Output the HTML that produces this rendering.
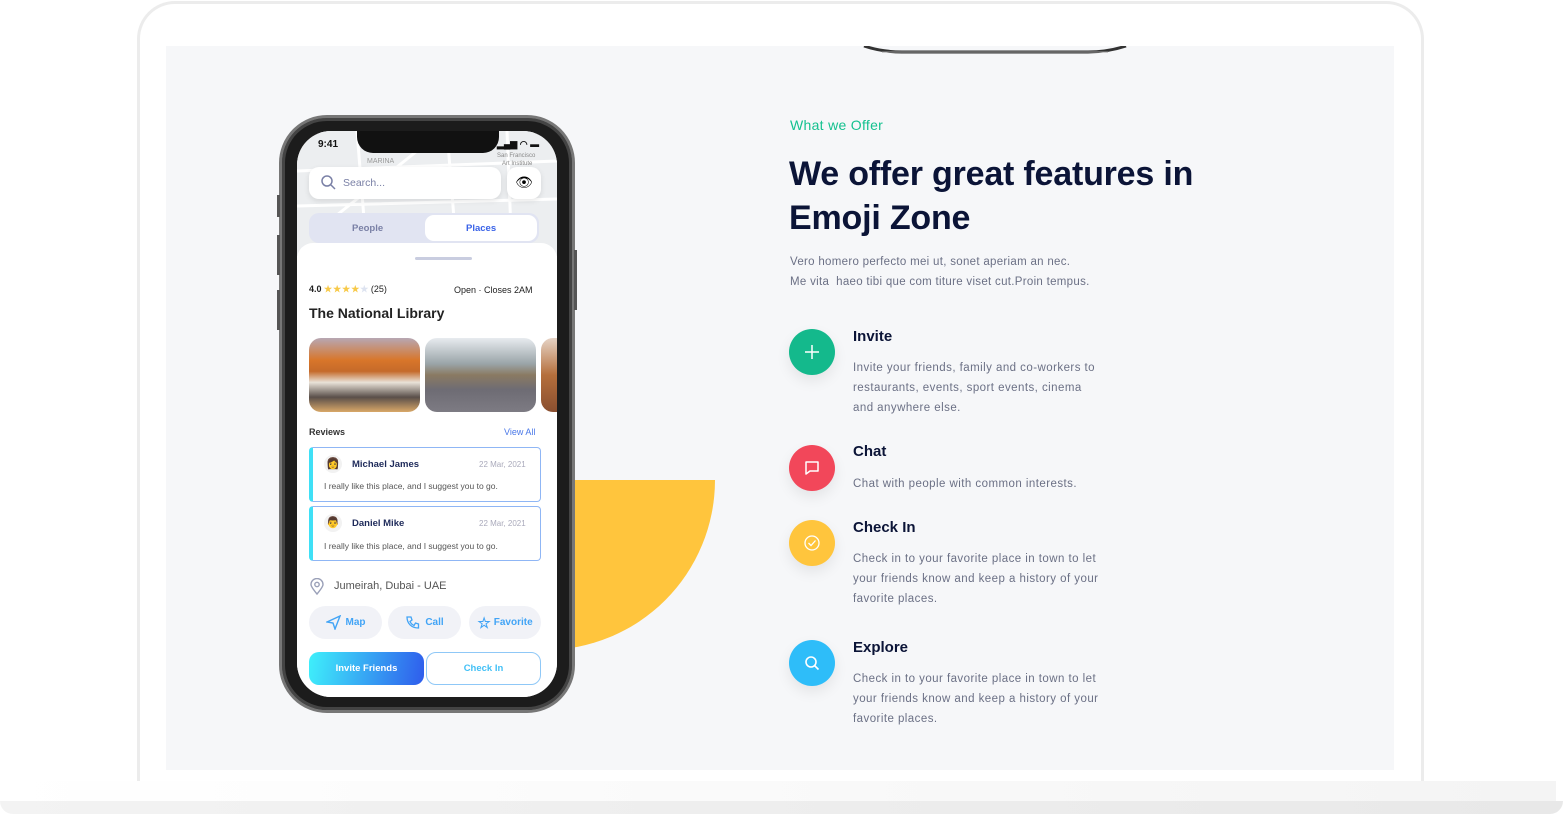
<!DOCTYPE html>
<html><head><meta charset="utf-8"><style>
*{margin:0;padding:0;box-sizing:border-box}
body{width:1563px;height:814px;background:#fff;position:relative;overflow:hidden;font-family:"Liberation Sans",sans-serif}
.a{position:absolute}
.frame{left:137px;top:1px;width:1287px;height:800px;border:3px solid #ececec;border-bottom:none;border-radius:38px 38px 0 0;background:#fff}
.screen{left:166px;top:46px;width:1228px;height:724px;background:#f6f7f9}
.base1{left:0;top:781px;width:1556px;height:20px;background:linear-gradient(90deg,#fff,#f4f4f4)}
.base2{left:0;top:801px;width:1563px;height:13px;background:linear-gradient(90deg,#f3f3f3,#e8e8e8);border-radius:0 0 40px 40px}
.ttl{color:#0b1437;font-weight:bold}
.p{color:#6b7085;font-size:11.5px;line-height:20px;letter-spacing:.45px}
.ic{width:46px;height:46px;border-radius:50%;box-shadow:0 6px 14px rgba(0,0,0,.08);display:flex;align-items:center;justify-content:center}
.ph{font-size:10px;color:#222}
.rev{left:309px;width:232px;height:55px;border:1.5px solid #8fb6f5;border-left:4px solid #3fe0f6;border-radius:4px;background:#fff}
.btn{top:606px;height:33px;border-radius:17px;background:#f1f2f7;color:#42a4f6;font-size:10px;font-weight:bold;display:flex;align-items:center;justify-content:center;gap:5px}
</style></head><body>
<div class="a frame"></div>
<div class="a screen"></div>
<div class="a base1"></div>
<div class="a base2"></div>
<!-- top phone edge -->
<svg class="a" style="left:862px;top:46px" width="266" height="8"><path d="M2 0Q20 6 40 6H226Q246 6 264 0" stroke="#333" stroke-width="3" fill="none"/><path d="M20 6H246" stroke="#999" stroke-width="1"/></svg>
<!-- yellow quarter -->
<div class="a" style="left:375px;top:310px;width:340px;height:340px;border-radius:50%;background:#ffc53d;clip-path:inset(170px 0 0 170px)"></div>

<!-- phone -->
<div class="a" style="left:279px;top:115px;width:296px;height:598px;border-radius:48px;background:#1c1c1c;border:3px solid #777;box-shadow:inset 0 0 0 3px #444"></div>
<div class="a" style="left:277px;top:195px;width:3px;height:22px;background:#555"></div>
<div class="a" style="left:277px;top:235px;width:3px;height:40px;background:#555"></div>
<div class="a" style="left:277px;top:290px;width:3px;height:40px;background:#555"></div>
<div class="a" style="left:574px;top:250px;width:3px;height:60px;background:#555"></div>
<div class="a" style="left:297px;top:131px;width:260px;height:566px;border-radius:34px;background:#fff;overflow:hidden">
  <div class="a" style="left:0;top:0;width:260px;height:125px;background:#eceef0"></div>
  <svg class="a" style="left:0;top:0" width="260" height="125"><g stroke="#fff" stroke-width="3" fill="none"><path d="M0 40L260 30M0 75L260 68M60 0L70 125M150 0L160 125M210 0L215 125M20 100L120 20"/></g><text x="70" y="32" font-size="7" fill="#999" font-family="Liberation Sans">MARINA</text><text x="200" y="26" font-size="6" fill="#888" font-family="Liberation Sans">San Francisco</text><text x="205" y="34" font-size="6" fill="#888" font-family="Liberation Sans">Art Institute</text></svg>
  <div class="a" style="left:60px;top:0;width:142px;height:22px;background:#111;border-radius:0 0 16px 16px"></div>
  <div class="a" style="left:21px;top:8px;font-size:10px;font-weight:bold;color:#111">9:41</div>
  <div class="a" style="left:200px;top:8px;font-size:9px;color:#111;font-weight:bold">▂▄▆ ◠ ▬</div>
  <div class="a" style="left:12px;top:36px;width:192px;height:32px;background:#fff;border-radius:10px;box-shadow:0 2px 6px rgba(0,0,0,.1)"></div>
  <svg class="a" style="left:23px;top:43px" width="16" height="16"><circle cx="7" cy="7" r="5" stroke="#7a80a6" stroke-width="1.5" fill="none"/><path d="M11 11l4 4" stroke="#7a80a6" stroke-width="1.5"/></svg>
  <div class="a" style="left:46px;top:46px;font-size:10.5px;color:#7a80a6">Search...</div>
  <div class="a" style="left:210px;top:36px;width:34px;height:32px;background:#fff;border-radius:10px;box-shadow:0 2px 6px rgba(0,0,0,.1);font-size:14px;text-align:center;line-height:30px">👁</div>
  <div class="a" style="left:12px;top:82px;width:230px;height:30px;background:#e1e4f2;border-radius:10px"></div>
  <div class="a" style="left:128px;top:84px;width:112px;height:26px;background:#fff;border-radius:9px"></div>
  <div class="a" style="left:55px;top:92px;font-size:9.5px;font-weight:bold;color:#7a80a6">People</div>
  <div class="a" style="left:169px;top:92px;font-size:9.5px;font-weight:bold;color:#3a63e8">Places</div>
  <div class="a" style="left:0;top:112px;width:260px;height:460px;background:#fff;border-radius:16px 16px 0 0"></div>
  <div class="a" style="left:118px;top:126px;width:57px;height:3px;background:#c9cde0;border-radius:2px"></div>
  <div class="a ph" style="left:12px;top:153px;font-weight:bold;font-size:9px">4.0 <span style="color:#f7c948;letter-spacing:1px">★★★★</span><span style="color:#dde3f0">★</span> <span style="font-weight:normal">(25)</span></div>
  <div class="a ph" style="left:157px;top:154px;font-size:9px">Open · Closes 2AM</div>
  <div class="a" style="left:12px;top:174px;font-size:14px;font-weight:bold;color:#222">The National Library</div>
  <div class="a" style="left:12px;top:207px;width:111px;height:74px;border-radius:12px;background:linear-gradient(180deg,#b7a7b3 0,#d8762a 30%,#c56a2a 45%,#e9e2d8 60%,#5a4f4a 80%,#d9a868 100%)"></div>
  <div class="a" style="left:128px;top:207px;width:111px;height:74px;border-radius:12px;background:linear-gradient(180deg,#e7ebef 0,#9aa4a8 35%,#8a7a62 50%,#6e6c74 70%,#7d7b83 100%)"></div>
  <div class="a" style="left:244px;top:207px;width:30px;height:74px;border-radius:12px;background:linear-gradient(180deg,#e6d3c5,#b56f3c,#8a4f30)"></div>
  <div class="a" style="left:12px;top:296px;font-size:9px;font-weight:bold;color:#333">Reviews</div>
  <div class="a" style="left:207px;top:296px;font-size:9px;color:#4a78e8">View All</div>
</div>
<div class="a rev" style="top:447px"></div>
<div class="a rev" style="top:506px"></div>
<div class="a" style="left:324px;top:455px;width:18px;height:18px;border-radius:50%;background:#f2f2f2;font-size:11px;text-align:center;line-height:18px">👩</div>
<div class="a" style="left:352px;top:459px;font-size:9.5px;font-weight:bold;color:#1e2a5a">Michael James</div>
<div class="a" style="left:479px;top:460px;font-size:8px;color:#aab">22 Mar, 2021</div>
<div class="a" style="left:324px;top:481px;font-size:8.5px;color:#555">I really like this place, and I suggest you to go.</div>
<div class="a" style="left:324px;top:514px;width:18px;height:18px;border-radius:50%;background:#f2f2f2;font-size:11px;text-align:center;line-height:18px">👨</div>
<div class="a" style="left:352px;top:518px;font-size:9.5px;font-weight:bold;color:#1e2a5a">Daniel Mike</div>
<div class="a" style="left:479px;top:519px;font-size:8px;color:#aab">22 Mar, 2021</div>
<div class="a" style="left:324px;top:541px;font-size:8.5px;color:#555">I really like this place, and I suggest you to go.</div>
<svg class="a" style="left:309px;top:578px" width="16" height="18"><path d="M8 16C3 10 2 8 2 6.5a6 6 0 0112 0C14 8 13 10 8 16z" stroke="#9aa0b8" stroke-width="1.4" fill="none"/><circle cx="8" cy="6.5" r="2.2" stroke="#9aa0b8" stroke-width="1.4" fill="none"/></svg>
<div class="a" style="left:334px;top:580px;font-size:11px;color:#555">Jumeirah, Dubai - UAE</div>
<div class="a btn" style="left:309px;width:73px"><svg width="15" height="15"><path d="M1 7L14 1 9 14 7 8z" stroke="#42a4f6" stroke-width="1.4" fill="none"/></svg>Map</div>
<div class="a btn" style="left:388px;width:73px"><svg width="15" height="15"><path d="M2 2h4l1 3-2 1.5a8 8 0 004 4L10.5 8l3 1v4c-7 0-11.5-4.5-11.5-11z" stroke="#42a4f6" stroke-width="1.3" fill="none"/></svg>Call</div>
<div class="a btn" style="left:469px;width:72px;gap:3px"><span style="font-size:15px">☆</span>Favorite</div>
<div class="a" style="left:309px;top:652px;width:115px;height:33px;border-radius:10px;background:linear-gradient(100deg,#3ff0fb,#2f5cec);color:#fff;font-size:9.5px;font-weight:bold;display:flex;align-items:center;justify-content:center">Invite Friends</div>
<div class="a" style="left:426px;top:652px;width:115px;height:33px;border-radius:10px;border:1.5px solid #8fc8f7;color:#42c0f6;font-size:9.5px;font-weight:bold;display:flex;align-items:center;justify-content:center;background:#fff">Check In</div>

<!-- right text -->
<div class="a" style="left:790px;top:117px;font-size:14px;color:#14c18f;letter-spacing:.3px">What we Offer</div>
<div class="a ttl" style="left:789px;top:152px;font-size:34px;line-height:44px;width:460px;letter-spacing:-.2px">We offer great features in Emoji Zone</div>
<div class="a p" style="left:790px;top:252px;font-size:11.5px;letter-spacing:.3px">Vero homero perfecto mei ut, sonet aperiam an nec.<br>Me vita&nbsp; haeo tibi que com titure viset cut.Proin tempus.</div>

<div class="a ic" style="left:789px;top:329px;background:#14b98c"><svg width="18" height="18"><path d="M9 2v14M2 9h14" stroke="#fff" stroke-width="1.5"/></svg></div>
<div class="a ttl" style="left:853px;top:328px;font-size:15px">Invite</div>
<div class="a p" style="left:853px;top:358px">Invite your friends, family and co-workers to<br>restaurants, events, sport events, cinema<br>and anywhere else.</div>

<div class="a ic" style="left:789px;top:445px;background:#f2475a"><svg width="18" height="18"><path d="M3 3h12v9H7l-4 3z" stroke="#fff" stroke-width="1.5" fill="none" stroke-linejoin="round"/></svg></div>
<div class="a ttl" style="left:853px;top:443px;font-size:15px">Chat</div>
<div class="a p" style="left:853px;top:474px">Chat with people with common interests.</div>

<div class="a ic" style="left:789px;top:520px;background:#ffc53d"><svg width="18" height="18"><circle cx="9" cy="9" r="7" stroke="#fff" stroke-width="1.3" fill="none"/><path d="M5.5 9l2.5 2.5 4.5-5" stroke="#fff" stroke-width="1.3" fill="none"/></svg></div>
<div class="a ttl" style="left:853px;top:519px;font-size:15px">Check In</div>
<div class="a p" style="left:853px;top:549px">Check in to your favorite place in town to let<br>your friends know and keep a history of your<br>favorite places.</div>

<div class="a ic" style="left:789px;top:640px;background:#2ebdf9"><svg width="18" height="18"><circle cx="8" cy="8" r="5" stroke="#fff" stroke-width="1.6" fill="none"/><path d="M11.5 11.5l4 4" stroke="#fff" stroke-width="1.6"/></svg></div>
<div class="a ttl" style="left:853px;top:639px;font-size:15px">Explore</div>
<div class="a p" style="left:853px;top:669px">Check in to your favorite place in town to let<br>your friends know and keep a history of your<br>favorite places.</div>
</body></html>
